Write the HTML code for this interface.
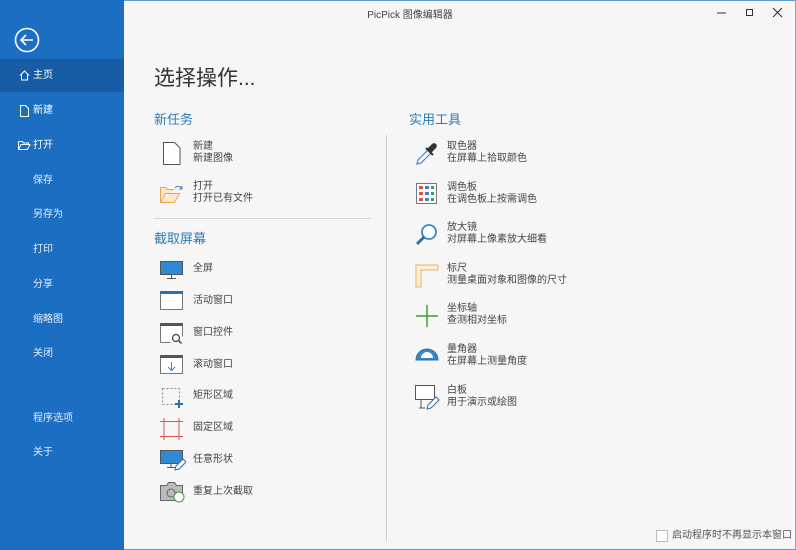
<!DOCTYPE html>
<html><head><meta charset="utf-8"><style>
*{margin:0;padding:0;box-sizing:border-box}
body{width:796px;height:550px;overflow:hidden;background:#f6f6f6;font-family:"Liberation Sans","Noto Sans CJK SC",sans-serif;position:relative;color:#333}
.sb{position:absolute;left:0;top:0;width:124px;height:550px;background:#1b6ec2}
.sel{position:absolute;left:0;top:59px;width:124px;height:33px;background:#165da6}
.si{position:absolute;color:#fff;font-size:10px;line-height:12px}
.si.l{color:#e3eef9}
.t{position:absolute;font-size:10px;line-height:12px;color:#444}
.h{position:absolute;font-size:13px;color:#2d7ab8}
svg{position:absolute}
</style></head><body>
<div style="position:absolute;left:0;top:0;width:796px;height:1px;background:#5a9bd0"></div>
<div style="position:absolute;left:795px;top:0;width:1px;height:550px;background:#8ab"></div>
<div style="position:absolute;left:0;top:549px;width:796px;height:1px;background:#5a9bd0"></div>
<div class="sb"></div><div class="sel"></div>
<svg style="left:14px;top:27px" width="26" height="26"><circle cx="13" cy="13" r="11.5" fill="none" stroke="#fff" stroke-width="1.6"/><path d="M7 13h12M12 8l-5 5 5 5" fill="none" stroke="#fff" stroke-width="1.6"/></svg>
<svg style="left:19px;top:70px" width="11" height="11"><path d="M1 5.5L5.5 1 10 5.5M2.5 4.5V10h6V4.5" fill="none" stroke="#fff"/></svg>
<div class="si" style="left:33px;top:70px">主页</div>
<svg style="left:19px;top:105px" width="11" height="12"><path d="M1.5 .5h5l3 3v8h-8z" fill="none" stroke="#fff"/></svg>
<div class="si" style="left:33px;top:105px">新建</div>
<svg style="left:18px;top:140px" width="13" height="11"><path d="M.5 1.5h4l1 1.5h5v2M.5 1.5v8h9l2.5-5h-9l-2.5 5" fill="none" stroke="#fff"/></svg>
<div class="si" style="left:33px;top:140px">打开</div>
<div class="si l" style="left:33px;top:175px">保存</div>
<div class="si l" style="left:33px;top:209px">另存为</div>
<div class="si l" style="left:33px;top:244px">打印</div>
<div class="si l" style="left:33px;top:279px">分享</div>
<div class="si l" style="left:33px;top:314px">缩略图</div>
<div class="si l" style="left:33px;top:348px">关闭</div>
<div class="si l" style="left:33px;top:413px">程序选项</div>
<div class="si l" style="left:33px;top:447px">关于</div>

<div style="position:absolute;left:124px;width:572px;top:6px;text-align:center;font-size:10px;color:#444;padding-left:0">PicPick 图像编辑器</div>
<svg style="left:715px;top:6px" width="75" height="14"><path d="M2 7h9" stroke="#333"/><rect x="31.5" y="3.5" width="6" height="6" fill="none" stroke="#333"/><path d="M58 2l9 9M67 2l-9 9" stroke="#333" stroke-width="1.1"/></svg>

<div style="position:absolute;left:154px;top:62px;font-size:21px;color:#333">选择操作...</div>
<div class="h" style="left:154px;top:109px">新任务</div>
<svg style="left:162px;top:142px" width="20" height="24"><path d="M1.5 .5h11l5.5 5.5v16.5h-16.5z" fill="#fff" stroke="#555"/></svg>
<div class="t" style="left:193px;top:141px">新建<br>新建图像</div>
<svg style="left:159px;top:182px" width="26" height="22"><path d="M1.5 20.5v-15h5l2 2h7M1.5 20.5h14l5-9h-14z" fill="#fde8cc" stroke="#e9a456"/><path d="M16 6a4 4 0 0 1 7 1M23 4v3h-3" fill="none" stroke="#3b86c6"/></svg>
<div class="t" style="left:193px;top:181px">打开<br>打开已有文件</div>
<div style="position:absolute;left:154px;top:218px;width:217px;height:1px;background:#d6d6d6"></div>
<div class="h" style="left:154px;top:228px">截取屏幕</div>

<svg style="left:160px;top:261px" width="24" height="18"><rect x=".5" y=".5" width="22" height="13" fill="#2f89d4" stroke="#555"/><path d="M11.5 14v3M7 17.5h9" stroke="#555"/></svg>
<div class="t" style="left:193px;top:263px">全屏</div>
<svg style="left:160px;top:291px" width="24" height="20"><rect x=".5" y=".5" width="22" height="18" fill="#fff" stroke="#777"/><rect x="0" y="0" width="23" height="3" fill="#2f6fa8"/></svg>
<div class="t" style="left:193px;top:295px">活动窗口</div>
<svg style="left:160px;top:323px" width="24" height="22"><path d="M.5 19.5v-19h22v13" fill="#fff" stroke="#777"/><path d="M.5 19.5h10" stroke="#777"/><rect x="0" y="0" width="23" height="3" fill="#555"/><circle cx="16" cy="15" r="3.5" fill="none" stroke="#444" stroke-width="1.2"/><path d="M18.5 17.5l3 3" stroke="#444" stroke-width="1.5"/></svg>
<div class="t" style="left:193px;top:327px">窗口控件</div>
<svg style="left:160px;top:355px" width="24" height="20"><rect x=".5" y=".5" width="22" height="18" fill="#fff" stroke="#777"/><rect x="0" y="0" width="23" height="3" fill="#555"/><path d="M11.5 7v8M8 12l3.5 3.5L15 12" fill="none" stroke="#3b86c6"/></svg>
<div class="t" style="left:193px;top:359px">滚动窗口</div>
<svg style="left:160px;top:387px" width="24" height="22"><rect x="2.5" y="1.5" width="17" height="16" fill="none" stroke="#888" stroke-dasharray="2 2"/><path d="M19 13v8M15 17h8" stroke="#2f6fa8" stroke-width="2"/></svg>
<div class="t" style="left:193px;top:390px">矩形区域</div>
<svg style="left:160px;top:418px" width="24" height="22"><path d="M4 0v22M19 0v22M0 3.5h23M0 18.5h23" stroke="#d9534f"/></svg>
<div class="t" style="left:193px;top:422px">固定区域</div>
<svg style="left:160px;top:450px" width="26" height="22"><rect x=".5" y=".5" width="22" height="13" fill="#2f89d4" stroke="#555"/><path d="M11 14v3M7 17.5h8" stroke="#555"/><path d="M15 20l1-4 7-7 3 3-7 7z" fill="#fff" stroke="#2f6fa8"/></svg>
<div class="t" style="left:193px;top:454px">任意形状</div>
<svg style="left:160px;top:481px" width="26" height="22"><path d="M.5 4.5h6l2-3h6l2 3h6v15h-22z" fill="#bbb" stroke="#666"/><circle cx="11" cy="12" r="4" fill="none" stroke="#666"/><circle cx="19" cy="16" r="5" fill="#fff" stroke="#3a9d3a"/></svg>
<div class="t" style="left:193px;top:486px">重复上次截取</div>

<div style="position:absolute;left:386px;top:135px;width:1px;height:406px;background:#ccc"></div>
<div class="h" style="left:409px;top:109px">实用工具</div>
<svg style="left:415px;top:142px" width="24" height="24"><path d="M2 22l1-4 10-10 3 3-10 10z" fill="#fff" stroke="#3b86c6" stroke-width="1.2"/><path d="M12 7l5-5a2 2 0 0 1 4 4l-5 5z" fill="#333"/><path d="M11 6l7 7" stroke="#333" stroke-width="2"/></svg>
<div class="t" style="left:447px;top:141px">取色器<br>在屏幕上拾取颜色</div>
<svg style="left:416px;top:183px" width="22" height="22"><rect x=".5" y=".5" width="20" height="20" fill="#fff" stroke="#777"/><g fill="#d9534f"><rect x="3" y="3" width="4" height="3"/><rect x="3" y="9" width="4" height="3"/><rect x="3" y="15" width="4" height="3"/></g><g fill="#3b86c6"><rect x="9" y="3" width="4" height="3"/><rect x="9" y="9" width="4" height="3"/><rect x="9" y="15" width="4" height="3"/></g><g fill="#3a9d7a"><rect x="15" y="3" width="3" height="3"/><rect x="15" y="9" width="3" height="3"/><rect x="15" y="15" width="3" height="3"/></g></svg>
<div class="t" style="left:447px;top:182px">调色板<br>在调色板上按需调色</div>
<svg style="left:415px;top:223px" width="24" height="24"><circle cx="14" cy="9" r="7" fill="#fff" stroke="#3b86c6" stroke-width="1.8"/><path d="M9 14l-7 7" stroke="#2f6fa8" stroke-width="3"/></svg>
<div class="t" style="left:447px;top:222px">放大镜<br>对屏幕上像素放大细看</div>
<svg style="left:415px;top:264px" width="24" height="24"><path d="M1 1h22v5h-17v17h-5z" fill="#fdf0dc" stroke="#e9b06a"/></svg>
<div class="t" style="left:447px;top:263px">标尺<br>测量桌面对象和图像的尺寸</div>
<svg style="left:415px;top:304px" width="24" height="24"><path d="M12 1v22M1 12h22" stroke="#3a9d3a" stroke-width="1.5"/></svg>
<div class="t" style="left:447px;top:303px">坐标轴<br>查测相对坐标</div>
<svg style="left:415px;top:346px" width="24" height="16"><path d="M1 14a11 11 0 0 1 22 0z" fill="#3b86c6" stroke="#2f6fa8"/><path d="M6 12a6 6 0 0 1 12 0z" fill="#fff"/></svg>
<div class="t" style="left:447px;top:344px">量角器<br>在屏幕上测量角度</div>
<svg style="left:415px;top:385px" width="26" height="26"><rect x=".5" y=".5" width="19" height="14" fill="#fff" stroke="#555"/><path d="M6 15v8M4 23h6" stroke="#555"/><path d="M12 24l1-4 8-8 3 3-8 8z" fill="#fff" stroke="#2f6fa8"/></svg>
<div class="t" style="left:447px;top:385px">白板<br>用于演示或绘图</div>

<div style="position:absolute;left:656px;top:530px;width:12px;height:12px;border:1px solid #bbb;background:#fff"></div>
<div class="t" style="left:672px;top:530px;color:#555">启动程序时不再显示本窗口</div>
</body></html>
